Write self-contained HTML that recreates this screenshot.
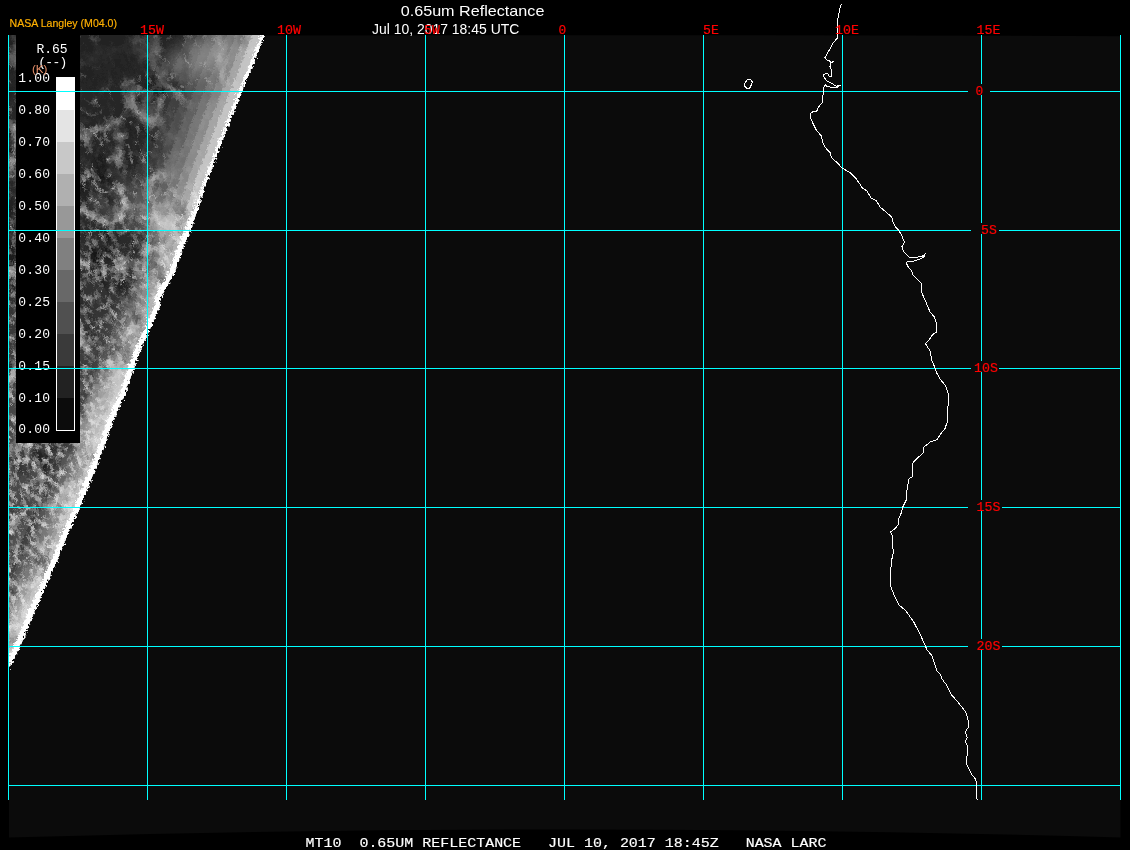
<!DOCTYPE html>
<html><head><meta charset="utf-8"><title>0.65um Reflectance</title>
<style>
html,body{margin:0;padding:0;background:#000;width:1130px;height:850px;overflow:hidden}
svg{display:block;position:absolute;left:0;top:0;will-change:transform}
text{white-space:pre}
.sans{font-family:"Liberation Sans",Arial,sans-serif}
.mono{font-family:"Liberation Mono","DejaVu Sans Mono",monospace}
</style></head><body>
<svg width="1130" height="850" viewBox="0 0 1130 850">
<defs>
<clipPath id="swclip"><polygon points="0,25 268.8,25 264.8,35 241.9,91.6 225,133.5 205.6,185.3 190.6,230.6 186.3,240 173.9,273.6 160.5,298.2 159.6,307.3 149.3,330.6 138.9,353.9 133.8,368.1 124.7,395.3 113,421.2 104,447 92,477 79.9,507.4 69,531.2 58.2,558.3 46,585.4 33.8,612.5 20.3,646.3 9.5,667 9,668 0,690"/></clipPath>
<linearGradient id="basev" gradientUnits="userSpaceOnUse" x1="0" y1="36" x2="0" y2="670">
<stop offset="0" stop-color="#232323"/>
<stop offset="0.3" stop-color="#2a2a2a"/>
<stop offset="0.42" stop-color="#323232"/>
<stop offset="0.52" stop-color="#3e3e3e"/>
<stop offset="0.6" stop-color="#484848"/>
<stop offset="0.75" stop-color="#484848"/>
<stop offset="0.85" stop-color="#585858"/>
<stop offset="0.92" stop-color="#787878"/>
<stop offset="1" stop-color="#a0a0a0"/>
</linearGradient>
<filter id="clouds" x="0" y="0" width="100%" height="100%" color-interpolation-filters="sRGB">
<feTurbulence type="turbulence" baseFrequency="0.022 0.015" numOctaves="4" seed="11" result="n"/>
<feColorMatrix in="n" type="matrix" values="0 0 0 0 0.8  0 0 0 0 0.8  0 0 0 0 0.8  -4 0 0 0 1.0"/>
</filter>
<filter id="clouds2" x="0" y="0" width="100%" height="100%" color-interpolation-filters="sRGB">
<feTurbulence type="turbulence" baseFrequency="0.06 0.035" numOctaves="3" seed="21" result="n"/>
<feColorMatrix in="n" type="matrix" values="0 0 0 0 1  0 0 0 0 1  0 0 0 0 1  -7 0 0 0 0.95"/>
</filter>
<filter id="mott" x="0" y="0" width="100%" height="100%" color-interpolation-filters="sRGB">
<feTurbulence type="fractalNoise" baseFrequency="0.2 0.12" numOctaves="3" seed="5" result="n"/>
<feColorMatrix in="n" type="matrix" values="0 0 0 0 0.9  0 0 0 0 0.9  0 0 0 0 0.9  3.2 0 0 0 -1.45"/>
</filter>
<filter id="dark" x="0" y="0" width="100%" height="100%" color-interpolation-filters="sRGB">
<feTurbulence type="fractalNoise" baseFrequency="0.05 0.03" numOctaves="4" seed="33" result="n"/>
<feColorMatrix in="n" type="matrix" values="0 0 0 0 0  0 0 0 0 0  0 0 0 0 0  -3.5 0 0 0 1.6"/>
</filter>
<linearGradient id="mmask" gradientUnits="userSpaceOnUse" x1="0" y1="36" x2="0" y2="670">
<stop offset="0" stop-color="#fff" stop-opacity="0"/>
<stop offset="0.2" stop-color="#fff" stop-opacity="0.1"/>
<stop offset="0.33" stop-color="#fff" stop-opacity="0.45"/>
<stop offset="0.55" stop-color="#fff" stop-opacity="0.6"/>
<stop offset="0.62" stop-color="#fff" stop-opacity="0.8"/>
<stop offset="1" stop-color="#fff" stop-opacity="0.8"/>
</linearGradient>
<mask id="mm"><rect x="0" y="0" width="300" height="700" fill="url(#mmask)"/></mask>
<clipPath id="outer"><rect x="9" y="35" width="300" height="700"/></clipPath>
<filter id="rag2" filterUnits="userSpaceOnUse" x="0" y="20" width="300" height="680">
<feTurbulence type="fractalNoise" baseFrequency="0.45" numOctaves="2" seed="9" result="n"/>
<feDisplacementMap in="SourceGraphic" in2="n" scale="6" xChannelSelector="R" yChannelSelector="G"/>
</filter>
<filter id="rag" x="-5%" y="-5%" width="110%" height="110%">
<feTurbulence type="fractalNoise" baseFrequency="0.5" numOctaves="2" seed="4" result="n"/>
<feDisplacementMap in="SourceGraphic" in2="n" scale="5" xChannelSelector="R" yChannelSelector="G"/>
</filter>
<linearGradient id="cmask" gradientUnits="userSpaceOnUse" x1="0" y1="36" x2="0" y2="670">
<stop offset="0" stop-color="#fff" stop-opacity="0.4"/>
<stop offset="0.1" stop-color="#fff" stop-opacity="0.7"/>
<stop offset="0.3" stop-color="#fff" stop-opacity="1"/>
<stop offset="1" stop-color="#fff" stop-opacity="1"/>
</linearGradient>
<clipPath id="upclip"><rect x="0" y="0" width="300" height="231"/></clipPath>
<clipPath id="lowclip2"><rect x="0" y="231" width="300" height="500"/></clipPath>
<clipPath id="lowclip"><rect x="0" y="215" width="300" height="500"/></clipPath>
<filter id="b8" x="-30%" y="-30%" width="160%" height="160%"><feGaussianBlur stdDeviation="8"/></filter>
<mask id="cm"><rect x="0" y="0" width="300" height="700" fill="url(#cmask)"/>
<g filter="url(#b8)" fill="#000"><ellipse cx="112" cy="60" rx="36" ry="24" opacity="0.85"/>
<polygon points="262,60 244,95 212,185 168,195 160,110 200,95" opacity="0.9"/></g></mask>
</defs>

<path d="M9,36.2 Q564.5,34.2 1120.5,36.2 L1120.5,837.5 Q564.5,821.5 9,837.5 Z" fill="#0b0b0b"/>
<defs><polyline id="ep" points="278,2 264.8,35 241.9,91.6 225,133.5 205.6,185.3 190.6,230.6 186.3,240 173.9,273.6 160.5,298.2 159.6,307.3 149.3,330.6 138.9,353.9 133.8,368.1 124.7,395.3 113,421.2 104,447 92,477 79.9,507.4 69,531.2 58.2,558.3 46,585.4 33.8,612.5 20.3,646.3 9.5,667 0,690" fill="none" stroke-linejoin="round"/></defs>
<g clip-path="url(#outer)"><g filter="url(#rag2)">
<g clip-path="url(#swclip)">
<rect x="0" y="25" width="280" height="670" fill="url(#basev)"/>
<g clip-path="url(#upclip)">
<use href="#ep" stroke="#343434" stroke-width="144.8"/>
<use href="#ep" stroke="#404040" stroke-width="126.2"/>
<use href="#ep" stroke="#4e4e4e" stroke-width="107.6"/>
<use href="#ep" stroke="#606060" stroke-width="89.1"/>
<use href="#ep" stroke="#747474" stroke-width="70.5"/>
<use href="#ep" stroke="#8a8a8a" stroke-width="53.8"/>
<use href="#ep" stroke="#a4a4a4" stroke-width="37.1"/>
<use href="#ep" stroke="#c4c4c4" stroke-width="22.3"/>
</g><g clip-path="url(#lowclip2)">
<use href="#ep" stroke="#343434" stroke-width="79.6"/>
<use href="#ep" stroke="#404040" stroke-width="69.4"/>
<use href="#ep" stroke="#4e4e4e" stroke-width="59.2"/>
<use href="#ep" stroke="#606060" stroke-width="49.0"/>
<use href="#ep" stroke="#747474" stroke-width="38.8"/>
<use href="#ep" stroke="#8a8a8a" stroke-width="29.6"/>
<use href="#ep" stroke="#a4a4a4" stroke-width="20.4"/>
<use href="#ep" stroke="#c4c4c4" stroke-width="12.2"/>
</g>
<g filter="url(#b8)" fill="#fff"><ellipse cx="196" cy="58" rx="34" ry="17" opacity="0.3" transform="rotate(-20 196 58)"/><ellipse cx="165" cy="218" rx="26" ry="16" opacity="0.3"/><ellipse cx="120" cy="200" rx="30" ry="22" opacity="0.12"/><ellipse cx="102" cy="415" rx="24" ry="42" opacity="0.3" transform="rotate(22 102 415)"/><ellipse cx="25" cy="625" rx="18" ry="40" opacity="0.3" transform="rotate(22 25 625)"/></g>
<g clip-path="url(#lowclip)" filter="url(#b8)"><use href="#ep" stroke="#fff" stroke-width="70" opacity="0.16"/></g>
<g mask="url(#cm)">
<g transform="rotate(-22 130 350)"><rect x="-150" y="-60" width="600" height="860" filter="url(#dark)" opacity="0.5"/></g>
<g transform="rotate(-22 130 350)"><rect x="-150" y="-60" width="600" height="860" filter="url(#clouds)"/></g>
<g transform="rotate(-28 130 350)"><rect x="-150" y="-60" width="600" height="860" filter="url(#clouds2)" opacity="0.8"/></g>
</g>
<g mask="url(#mm)"><g transform="rotate(-22 130 350)"><rect x="-150" y="-60" width="600" height="860" filter="url(#mott)"/></g></g>
<g filter="url(#rag)">
<use href="#ep" stroke="#fff" stroke-width="6.7"/>
<g clip-path="url(#lowclip)">
<use href="#ep" stroke="#fff" stroke-width="10.8"/>
</g>
</g>
</g>
</g></g>
<rect x="16" y="35" width="64" height="408" fill="#000"/>
<rect x="56" y="78" width="19" height="32" fill="#ffffff" shape-rendering="crispEdges"/>
<rect x="56" y="110" width="19" height="32" fill="#e4e4e4" shape-rendering="crispEdges"/>
<rect x="56" y="142" width="19" height="32" fill="#c8c8c8" shape-rendering="crispEdges"/>
<rect x="56" y="174" width="19" height="32" fill="#b0b0b0" shape-rendering="crispEdges"/>
<rect x="56" y="206" width="19" height="32" fill="#989898" shape-rendering="crispEdges"/>
<rect x="56" y="238" width="19" height="32" fill="#808080" shape-rendering="crispEdges"/>
<rect x="56" y="270" width="19" height="32" fill="#686868" shape-rendering="crispEdges"/>
<rect x="56" y="302" width="19" height="32" fill="#505050" shape-rendering="crispEdges"/>
<rect x="56" y="334" width="19" height="32" fill="#3a3a3a" shape-rendering="crispEdges"/>
<rect x="56" y="366" width="19" height="32" fill="#222222" shape-rendering="crispEdges"/>
<rect x="56" y="398" width="19" height="32" fill="#0c0c0c" shape-rendering="crispEdges"/>
<rect x="56.5" y="77.5" width="18" height="353" fill="none" stroke="#fff" stroke-width="1" shape-rendering="crispEdges"/>
<text class="mono" x="18.2" y="82" font-size="13" fill="#fff" textLength="31.8" lengthAdjust="spacing">1.00</text>
<text class="mono" x="18.2" y="114" font-size="13" fill="#fff" textLength="31.8" lengthAdjust="spacing">0.80</text>
<text class="mono" x="18.2" y="146" font-size="13" fill="#fff" textLength="31.8" lengthAdjust="spacing">0.70</text>
<text class="mono" x="18.2" y="178" font-size="13" fill="#fff" textLength="31.8" lengthAdjust="spacing">0.60</text>
<text class="mono" x="18.2" y="210" font-size="13" fill="#fff" textLength="31.8" lengthAdjust="spacing">0.50</text>
<text class="mono" x="18.2" y="242" font-size="13" fill="#fff" textLength="31.8" lengthAdjust="spacing">0.40</text>
<text class="mono" x="18.2" y="274" font-size="13" fill="#fff" textLength="31.8" lengthAdjust="spacing">0.30</text>
<text class="mono" x="18.2" y="306" font-size="13" fill="#fff" textLength="31.8" lengthAdjust="spacing">0.25</text>
<text class="mono" x="18.2" y="338" font-size="13" fill="#fff" textLength="31.8" lengthAdjust="spacing">0.20</text>
<text class="mono" x="18.2" y="370" font-size="13" fill="#fff" textLength="31.8" lengthAdjust="spacing">0.15</text>
<text class="mono" x="18.2" y="402" font-size="13" fill="#fff" textLength="31.8" lengthAdjust="spacing">0.10</text>
<text class="mono" x="18.2" y="433" font-size="13" fill="#fff" textLength="31.8" lengthAdjust="spacing">0.00</text>
<text class="mono" x="36.5" y="53" font-size="13" fill="#fff" textLength="31" lengthAdjust="spacing">R.65</text>
<text class="mono" x="38.3" y="65.5" font-size="13" fill="#fff" textLength="29" lengthAdjust="spacing">(--)</text>
<text class="sans" x="32" y="72.7" font-size="11.5" fill="#e8906a" textLength="15.5" lengthAdjust="spacingAndGlyphs">(K)</text>
<g fill="#00ffff" shape-rendering="crispEdges">
<rect x="8" y="35" width="1" height="765"/>
<rect x="147" y="35" width="1" height="765"/>
<rect x="286" y="35" width="1" height="765"/>
<rect x="425" y="35" width="1" height="765"/>
<rect x="564" y="35" width="1" height="765"/>
<rect x="703" y="35" width="1" height="765"/>
<rect x="842" y="35" width="1" height="765"/>
<rect x="981" y="35" width="1" height="765"/>
<rect x="1120" y="35" width="1" height="765"/>
<rect x="8" y="91" width="960" height="1"/>
<rect x="990" y="91" width="131" height="1"/>
<rect x="8" y="230" width="963" height="1"/>
<rect x="999" y="230" width="122" height="1"/>
<rect x="8" y="368" width="963" height="1"/>
<rect x="999" y="368" width="122" height="1"/>
<rect x="8" y="507" width="960" height="1"/>
<rect x="1002" y="507" width="119" height="1"/>
<rect x="8" y="646" width="960" height="1"/>
<rect x="1002" y="646" width="119" height="1"/>
<rect x="8" y="785" width="1113" height="1"/>
</g>
<rect x="981" y="84" width="1" height="11" fill="#0b0b0b" shape-rendering="crispEdges"/>
<rect x="981" y="223" width="1" height="11" fill="#0b0b0b" shape-rendering="crispEdges"/>
<rect x="981" y="361" width="1" height="11" fill="#0b0b0b" shape-rendering="crispEdges"/>
<rect x="981" y="500" width="1" height="11" fill="#0b0b0b" shape-rendering="crispEdges"/>
<rect x="981" y="639" width="1" height="11" fill="#0b0b0b" shape-rendering="crispEdges"/>
<polyline points="841.5,3.9 840.1,8.0 838.3,15.9 837.3,23.0 838.0,24.8 837.1,35.4 838.0,37.2 833.5,42.5 829.1,50.4 824.7,58.0 827.0,60.2 829.5,61.0 830.9,62.3 833.5,61.6 831.2,62.8 830.0,66.4 831.4,69.9 831.6,76.5 829.1,76.5 828.2,74.0 825.6,73.5 823.3,75.2 824.2,77.9 827.3,81.0 832.7,84.0 836.2,86.2 840.6,85.0 836.2,88.0 830.9,87.3 827.0,86.4 825.6,84.6 823.5,88.0 823.8,91.5 822.7,96.5 822.0,102.7 818.5,107.0 816.7,111.2 813.2,111.5 810.5,113.3 810.2,116.8 812.3,122.1 815.0,127.4 816.3,130.0 821.6,136.2 822.5,142.4 825.1,147.3 830.4,153.0 831.3,157.4 836.6,162.2 842.3,168.1 849.9,172.5 856.1,178.7 860.5,184.9 861.4,187.2 866.7,190.7 871.2,198.1 876.5,200.8 880.0,207.0 886.2,212.3 891.9,217.1 892.4,221.2 895.9,227.3 898.9,230.5 902.1,236.2 904.4,242.4 901.8,246.8 903.9,252.1 909.2,257.1 917.2,257.1 922.5,256.0 924.8,254.4 924.2,256.5 921.6,258.3 914.5,261.0 908.3,261.3 906.2,262.7 908.3,267.2 911.3,270.0 913.1,275.3 921.1,283.3 921.9,293.0 925.5,301.0 929.9,311.6 934.3,316.9 936.5,323.1 937.0,331.9 932.6,334.6 929.0,339.9 925.5,343.5 928.1,347.9 930.4,351.4 931.7,360.3 935.2,368.2 936.1,371.8 940.5,379.7 945.8,385.9 947.6,392.1 949.0,396.5 948.0,406.3 947.7,420.6 945.0,428.6 940.6,433.9 937.1,439.7 930.9,441.5 923.8,447.2 922.9,453.4 917.6,457.8 912.7,463.1 912.8,476.4 908.8,479.0 907.0,489.6 906.1,500.3 902.6,507.3 900.8,514.4 898.1,519.7 898.1,525.0 894.6,528.9 890.5,532.1 892.3,535.7 892.5,544.5 893.4,551.6 891.6,560.6 890.5,573.0 890.7,586.3 894.1,595.1 899.0,604.9 906.1,611.1 914.1,622.6 921.2,636.7 925.6,646.5 927.0,650.0 931.8,655.3 934.4,663.3 937.1,671.2 940.6,674.8 941.5,678.3 946.8,685.4 951.7,695.0 957.9,702.1 965.8,711.9 968.5,721.6 968.5,726.9 965.3,732.2 967.1,737.5 965.3,741.9 967.6,746.4 967.6,755.2 966.2,757.9 966.7,764.1 970.3,771.2 971.2,773.8 975.6,779.1 977.0,786.2 976.5,790.6 976.5,798.6 977.7,799.8" fill="none" stroke="#fff" stroke-width="1" shape-rendering="crispEdges"/>
<polygon points="747.2,80.0 750.9,79.6 752.5,82.3 749.8,88.0 746.8,88.1 744.2,85.8 745.0,82.8" fill="none" stroke="#fff" stroke-width="1" shape-rendering="crispEdges"/>
<text class="mono" x="975.5" y="95" font-size="12" fill="#ff0000" stroke="#ff0000" stroke-width="0.2" textLength="7.7" lengthAdjust="spacingAndGlyphs">0</text>
<text class="mono" x="981" y="234" font-size="12" fill="#ff0000" stroke="#ff0000" stroke-width="0.2" textLength="15.8" lengthAdjust="spacingAndGlyphs">5S</text>
<text class="mono" x="974" y="372" font-size="12" fill="#ff0000" stroke="#ff0000" stroke-width="0.2" textLength="23.9" lengthAdjust="spacingAndGlyphs">10S</text>
<text class="mono" x="976.5" y="511" font-size="12" fill="#ff0000" stroke="#ff0000" stroke-width="0.2" textLength="23.9" lengthAdjust="spacingAndGlyphs">15S</text>
<text class="mono" x="976.5" y="650" font-size="12" fill="#ff0000" stroke="#ff0000" stroke-width="0.2" textLength="23.9" lengthAdjust="spacingAndGlyphs">20S</text>
<text class="sans" x="400.7" y="15.6" font-size="15" fill="#fff" textLength="143.7" lengthAdjust="spacingAndGlyphs">0.65um Reflectance</text>
<text class="sans" x="372" y="33.7" font-size="15" fill="#fff" textLength="147.3" lengthAdjust="spacingAndGlyphs">Jul 10, 2017 18:45 UTC</text>
<text class="sans" x="9.5" y="27" font-size="11" fill="#ffb000" stroke="#ffb000" stroke-width="0.2" textLength="107.5" lengthAdjust="spacingAndGlyphs">NASA Langley (M04.0)</text>
<text class="mono" x="140" y="34" font-size="12" fill="#ff0000" stroke="#ff0000" stroke-width="0.2" textLength="23.9" lengthAdjust="spacingAndGlyphs">15W</text>
<text class="mono" x="277" y="34" font-size="12" fill="#ff0000" stroke="#ff0000" stroke-width="0.2" textLength="23.9" lengthAdjust="spacingAndGlyphs">10W</text>
<text class="mono" x="424" y="34" font-size="12" fill="#ff0000" stroke="#ff0000" stroke-width="0.2" textLength="15.8" lengthAdjust="spacingAndGlyphs">5W</text>
<text class="mono" x="558.5" y="34" font-size="12" fill="#ff0000" stroke="#ff0000" stroke-width="0.2" textLength="7.7" lengthAdjust="spacingAndGlyphs">0</text>
<text class="mono" x="703" y="34" font-size="12" fill="#ff0000" stroke="#ff0000" stroke-width="0.2" textLength="15.8" lengthAdjust="spacingAndGlyphs">5E</text>
<text class="mono" x="835" y="34" font-size="12" fill="#ff0000" stroke="#ff0000" stroke-width="0.2" textLength="23.9" lengthAdjust="spacingAndGlyphs">10E</text>
<text class="mono" x="976.5" y="34" font-size="12" fill="#ff0000" stroke="#ff0000" stroke-width="0.2" textLength="23.9" lengthAdjust="spacingAndGlyphs">15E</text>
<text class="mono" x="305.5" y="847" font-size="13" fill="#fff" stroke="#fff" stroke-width="0.15" textLength="521" lengthAdjust="spacingAndGlyphs">MT10  0.65UM REFLECTANCE   JUL 10, 2017 18:45Z   NASA LARC</text>
</svg></body></html>
